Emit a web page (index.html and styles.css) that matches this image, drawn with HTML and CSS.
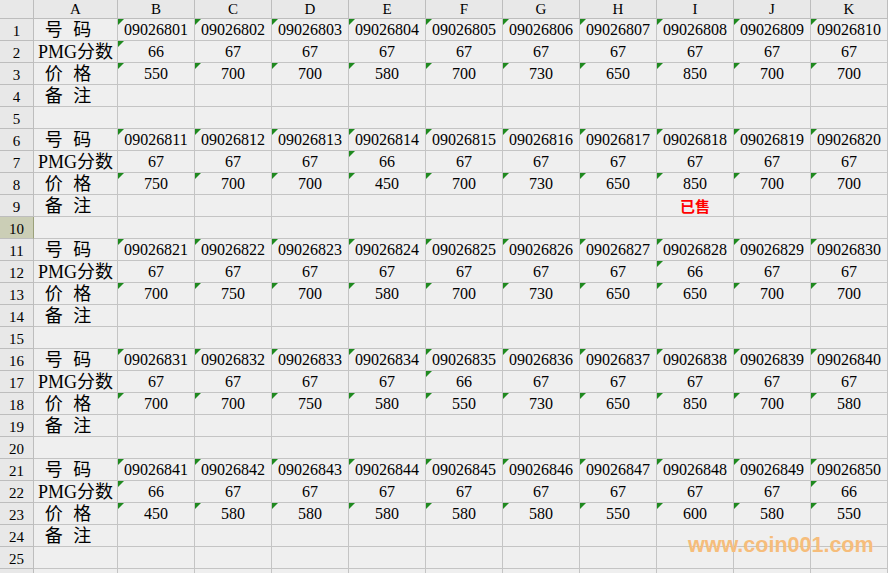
FILE: index.html
```html
<!DOCTYPE html>
<html lang="zh">
<head>
<meta charset="utf-8">
<title>号码表</title>
<link rel="stylesheet" href="styles.css">
</head>
<body>
<div class="sheet">
<div class="h corner"></div><div class="h col">A</div><div class="h col">B</div><div class="h col">C</div><div class="h col">D</div><div class="h col">E</div><div class="h col">F</div><div class="h col">G</div><div class="h col">H</div><div class="h col">I</div><div class="h col">J</div><div class="h col">K</div>

<div class="h rn">1</div><div class="c a"><span class="lbl">号 码</span></div><div class="c t">09026801</div><div class="c t">09026802</div><div class="c t">09026803</div><div class="c t">09026804</div><div class="c t">09026805</div><div class="c t">09026806</div><div class="c t">09026807</div><div class="c t">09026808</div><div class="c t">09026809</div><div class="c t">09026810</div>
<div class="h rn">2</div><div class="c a">PMG分数</div><div class="c t">66</div><div class="c">67</div><div class="c">67</div><div class="c">67</div><div class="c">67</div><div class="c">67</div><div class="c">67</div><div class="c">67</div><div class="c">67</div><div class="c">67</div>
<div class="h rn">3</div><div class="c a"><span class="lbl">价 格</span></div><div class="c t">550</div><div class="c t">700</div><div class="c t">700</div><div class="c t">580</div><div class="c t">700</div><div class="c t">730</div><div class="c t">650</div><div class="c t">850</div><div class="c t">700</div><div class="c t">700</div>
<div class="h rn">4</div><div class="c a"><span class="lbl">备 注</span></div><div class="c"></div><div class="c"></div><div class="c"></div><div class="c"></div><div class="c"></div><div class="c"></div><div class="c"></div><div class="c"></div><div class="c"></div><div class="c"></div>
<div class="h rn">5</div><div class="c a"></div><div class="c"></div><div class="c"></div><div class="c"></div><div class="c"></div><div class="c"></div><div class="c"></div><div class="c"></div><div class="c"></div><div class="c"></div><div class="c"></div>

<div class="h rn">6</div><div class="c a"><span class="lbl">号 码</span></div><div class="c t">09026811</div><div class="c t">09026812</div><div class="c t">09026813</div><div class="c t">09026814</div><div class="c t">09026815</div><div class="c t">09026816</div><div class="c t">09026817</div><div class="c t">09026818</div><div class="c t">09026819</div><div class="c t">09026820</div>
<div class="h rn">7</div><div class="c a">PMG分数</div><div class="c">67</div><div class="c">67</div><div class="c">67</div><div class="c t">66</div><div class="c">67</div><div class="c">67</div><div class="c">67</div><div class="c">67</div><div class="c">67</div><div class="c">67</div>
<div class="h rn">8</div><div class="c a"><span class="lbl">价 格</span></div><div class="c t">750</div><div class="c t">700</div><div class="c t">700</div><div class="c t">450</div><div class="c t">700</div><div class="c t">730</div><div class="c t">650</div><div class="c t">850</div><div class="c t">700</div><div class="c t">700</div>
<div class="h rn">9</div><div class="c a"><span class="lbl">备 注</span></div><div class="c"></div><div class="c"></div><div class="c"></div><div class="c"></div><div class="c"></div><div class="c"></div><div class="c"></div><div class="c sold">已售</div><div class="c"></div><div class="c"></div>
<div class="h rn sel">10</div><div class="c a"></div><div class="c"></div><div class="c"></div><div class="c"></div><div class="c"></div><div class="c"></div><div class="c"></div><div class="c"></div><div class="c"></div><div class="c"></div><div class="c"></div>

<div class="h rn">11</div><div class="c a"><span class="lbl">号 码</span></div><div class="c t">09026821</div><div class="c t">09026822</div><div class="c t">09026823</div><div class="c t">09026824</div><div class="c t">09026825</div><div class="c t">09026826</div><div class="c t">09026827</div><div class="c t">09026828</div><div class="c t">09026829</div><div class="c t">09026830</div>
<div class="h rn">12</div><div class="c a">PMG分数</div><div class="c">67</div><div class="c">67</div><div class="c">67</div><div class="c">67</div><div class="c">67</div><div class="c">67</div><div class="c">67</div><div class="c t">66</div><div class="c">67</div><div class="c">67</div>
<div class="h rn">13</div><div class="c a"><span class="lbl">价 格</span></div><div class="c t">700</div><div class="c t">750</div><div class="c t">700</div><div class="c t">580</div><div class="c t">700</div><div class="c t">730</div><div class="c t">650</div><div class="c t">650</div><div class="c t">700</div><div class="c t">700</div>
<div class="h rn">14</div><div class="c a"><span class="lbl">备 注</span></div><div class="c"></div><div class="c"></div><div class="c"></div><div class="c"></div><div class="c"></div><div class="c"></div><div class="c"></div><div class="c"></div><div class="c"></div><div class="c"></div>
<div class="h rn">15</div><div class="c a"></div><div class="c"></div><div class="c"></div><div class="c"></div><div class="c"></div><div class="c"></div><div class="c"></div><div class="c"></div><div class="c"></div><div class="c"></div><div class="c"></div>

<div class="h rn">16</div><div class="c a"><span class="lbl">号 码</span></div><div class="c t">09026831</div><div class="c t">09026832</div><div class="c t">09026833</div><div class="c t">09026834</div><div class="c t">09026835</div><div class="c t">09026836</div><div class="c t">09026837</div><div class="c t">09026838</div><div class="c t">09026839</div><div class="c t">09026840</div>
<div class="h rn">17</div><div class="c a">PMG分数</div><div class="c">67</div><div class="c">67</div><div class="c">67</div><div class="c">67</div><div class="c t">66</div><div class="c">67</div><div class="c">67</div><div class="c">67</div><div class="c">67</div><div class="c">67</div>
<div class="h rn">18</div><div class="c a"><span class="lbl">价 格</span></div><div class="c t">700</div><div class="c t">700</div><div class="c t">750</div><div class="c t">580</div><div class="c t">550</div><div class="c t">730</div><div class="c t">650</div><div class="c t">850</div><div class="c t">700</div><div class="c t">580</div>
<div class="h rn">19</div><div class="c a"><span class="lbl">备 注</span></div><div class="c"></div><div class="c"></div><div class="c"></div><div class="c"></div><div class="c"></div><div class="c"></div><div class="c"></div><div class="c"></div><div class="c"></div><div class="c"></div>
<div class="h rn">20</div><div class="c a"></div><div class="c"></div><div class="c"></div><div class="c"></div><div class="c"></div><div class="c"></div><div class="c"></div><div class="c"></div><div class="c"></div><div class="c"></div><div class="c"></div>

<div class="h rn">21</div><div class="c a"><span class="lbl">号 码</span></div><div class="c t">09026841</div><div class="c t">09026842</div><div class="c t">09026843</div><div class="c t">09026844</div><div class="c t">09026845</div><div class="c t">09026846</div><div class="c t">09026847</div><div class="c t">09026848</div><div class="c t">09026849</div><div class="c t">09026850</div>
<div class="h rn">22</div><div class="c a">PMG分数</div><div class="c t">66</div><div class="c">67</div><div class="c">67</div><div class="c">67</div><div class="c">67</div><div class="c">67</div><div class="c">67</div><div class="c">67</div><div class="c">67</div><div class="c t">66</div>
<div class="h rn">23</div><div class="c a"><span class="lbl">价 格</span></div><div class="c t">450</div><div class="c t">580</div><div class="c t">580</div><div class="c t">580</div><div class="c t">580</div><div class="c t">580</div><div class="c t">550</div><div class="c t">600</div><div class="c t">580</div><div class="c t">550</div>
<div class="h rn">24</div><div class="c a"><span class="lbl">备 注</span></div><div class="c"></div><div class="c"></div><div class="c"></div><div class="c"></div><div class="c"></div><div class="c"></div><div class="c"></div><div class="c"></div><div class="c"></div><div class="c"></div>
<div class="h rn">25</div><div class="c a"></div><div class="c"></div><div class="c"></div><div class="c"></div><div class="c"></div><div class="c"></div><div class="c"></div><div class="c"></div><div class="c"></div><div class="c"></div><div class="c"></div>
<div class="h rn"></div><div class="c a"></div><div class="c"></div><div class="c"></div><div class="c"></div><div class="c"></div><div class="c"></div><div class="c"></div><div class="c"></div><div class="c"></div><div class="c"></div><div class="c"></div>
</div>
<div class="watermark">www.coin001.com</div>
</body>
</html>
```
FILE: styles.css
```css
html, body {
  margin: 0;
  padding: 0;
  background: #efefef;
  overflow: hidden;
  height: 573px;
}
body {
  position: relative;
  font-family: "Liberation Serif", "Noto Sans CJK SC", serif;
  color: #000;
}
.sheet {
  display: grid;
  grid-template-columns: 34px 84px repeat(10, 77px);
  grid-template-rows: 19px repeat(26, 22px);
}
.h, .c {
  box-sizing: border-box;
  border-right: 1px solid #c4c4c4;
  border-bottom: 1px solid #c4c4c4;
  display: flex;
  align-items: flex-end;
  justify-content: center;
  overflow: hidden;
  white-space: nowrap;
}
.h {
  background: #e8e8e8;
  border-color: #bdbdbd;
  font-size: 15px;
  line-height: 18px;
}
.col {
  align-items: center;
  padding-bottom: 1px;
}
.rn {
  font-size: 15px;
  line-height: 18px;
  padding-bottom: 0;
}
.rn.sel {
  background: #cbceb6;
  border-right-color: #9aa07a;
}
.c {
  position: relative;
  background: #efefef;
  font-size: 16px;
  line-height: 18px;
  padding-bottom: 1px;
}
.c.a {
  font-size: 18px;
  line-height: 20px;
  padding-bottom: 0;
}
.lbl {
  word-spacing: 6px;
  padding-right: 15px;
}
.c.t::before {
  content: "";
  position: absolute;
  top: 0;
  left: 0;
  width: 0;
  height: 0;
  border-top: 6px solid #1f8a1f;
  border-right: 6px solid transparent;
}
.sold {
  color: #ff0000;
  font-weight: bold;
  font-family: "Noto Sans CJK SC", sans-serif;
  font-size: 15px;
}
.watermark {
  position: absolute;
  left: 688px;
  top: 533px;
  font-family: "Liberation Sans", Arial, sans-serif;
  font-weight: bold;
  font-size: 21.5px;
  color: #f6bd7b;
}
```
